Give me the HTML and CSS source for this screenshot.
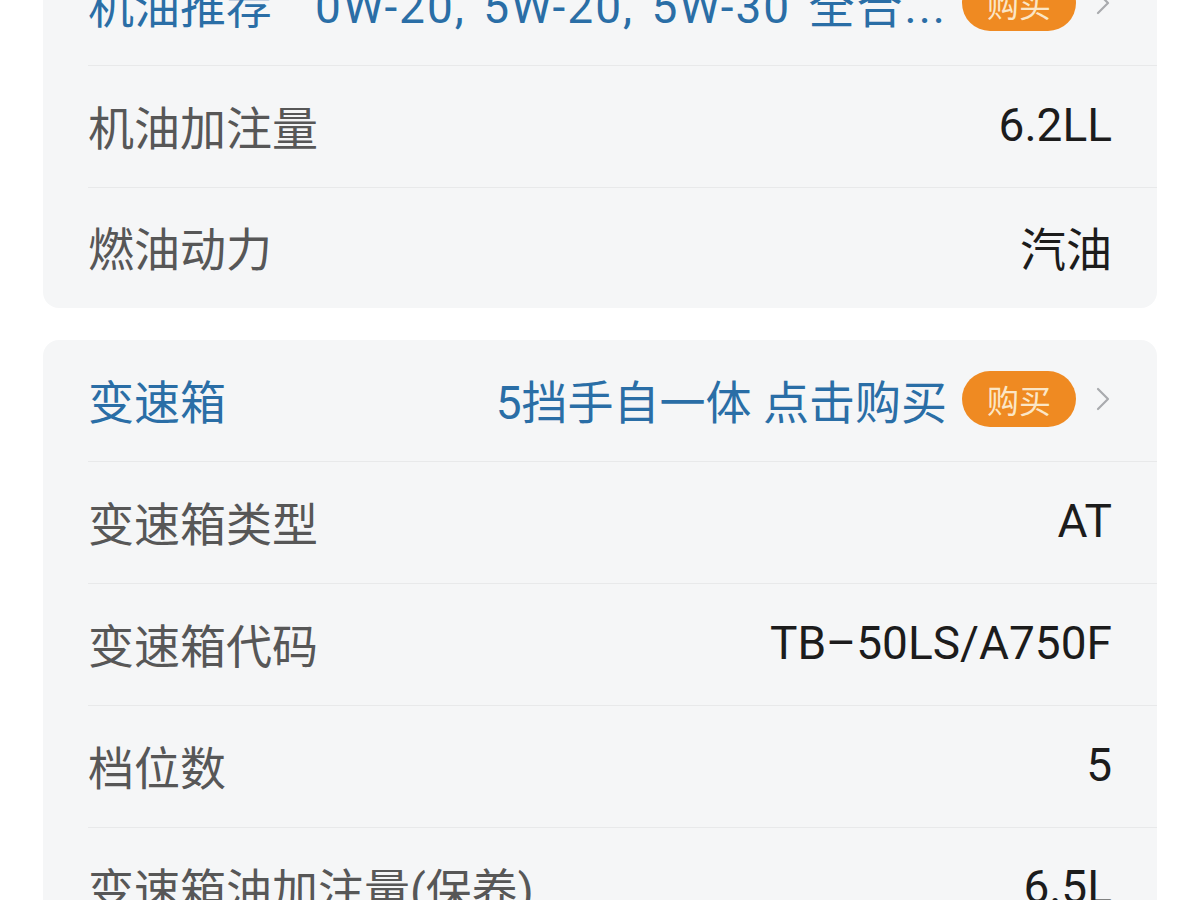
FILE: index.html
```html
<!DOCTYPE html>
<html lang="zh-CN">
<head>
<meta charset="utf-8">
<link rel="stylesheet" href="styles.css">
</head>
<body>
<div class="page">
  <section class="card">
    <div class="row">
      <span class="label blue">机油推荐</span>
      <span class="value blue wide">0W-20, 5W-20, 5W-30 全合...</span>
      <span class="badge">购买</span>
      <span class="chev"><svg width="14" height="24" viewBox="0 0 14 24"><path d="M2 2 L12 12 L2 22" fill="none" stroke="#a9abae" stroke-width="2.2" stroke-linecap="round" stroke-linejoin="round"/></svg></span>
    </div>
    <div class="row">
      <span class="label">机油加注量</span>
      <span class="value">6.2LL</span>
    </div>
    <div class="row last">
      <span class="label">燃油动力</span>
      <span class="value">汽油</span>
    </div>
  </section>
  <section class="card">
    <div class="row">
      <span class="label blue">变速箱</span>
      <span class="value blue">5挡手自一体 点击购买</span>
      <span class="badge">购买</span>
      <span class="chev"><svg width="14" height="24" viewBox="0 0 14 24"><path d="M2 2 L12 12 L2 22" fill="none" stroke="#a9abae" stroke-width="2.2" stroke-linecap="round" stroke-linejoin="round"/></svg></span>
    </div>
    <div class="row">
      <span class="label">变速箱类型</span>
      <span class="value">AT</span>
    </div>
    <div class="row">
      <span class="label">变速箱代码</span>
      <span class="value">TB–50LS/A750F</span>
    </div>
    <div class="row">
      <span class="label">档位数</span>
      <span class="value">5</span>
    </div>
    <div class="row">
      <span class="label">变速箱油加注量(保养)</span>
      <span class="value">6.5L</span>
    </div>
  </section>
</div>
</body>
</html>
```
FILE: styles.css
```css
html, body {
  margin: 0;
  padding: 0;
  background: #ffffff;
}
body {
  font-family: "Roboto", "Noto Sans CJK SC", "Noto Sans", sans-serif;
  overflow: hidden;
  height: 900px;
}
.page {
  margin-top: -56px;
  padding: 0 43px;
  display: flex;
  flex-direction: column;
  gap: 32px;
}
.card {
  background: #f5f6f7;
  border-radius: 16px;
  padding-left: 45px;
}
.row {
  height: 117px;
  padding-bottom: 4px;
  border-bottom: 1px solid #e8e9ea;
  display: flex;
  align-items: center;
  padding-right: 45px;
}
.row.last {
  border-bottom: none;
  height: 116px;
}
.label {
  font-size: 46px;
  color: #575757;
  white-space: nowrap;
}
.value {
  margin-left: auto;
  font-size: 46px;
  color: #1c1c1c;
  white-space: nowrap;
}
.value.wide {
  letter-spacing: 2px;
  word-spacing: 4px;
}
.blue {
  color: #2a6ea6;
}
.badge {
  margin-left: 15px;
  width: 114px;
  height: 56px;
  border-radius: 28px;
  background: #ef8a22;
  color: #fbe6c6;
  font-size: 32px;
  display: flex;
  align-items: center;
  justify-content: center;
}
.chev {
  margin-left: 20px;
  display: flex;
  align-items: center;
  margin-right: 2px;
}
```
